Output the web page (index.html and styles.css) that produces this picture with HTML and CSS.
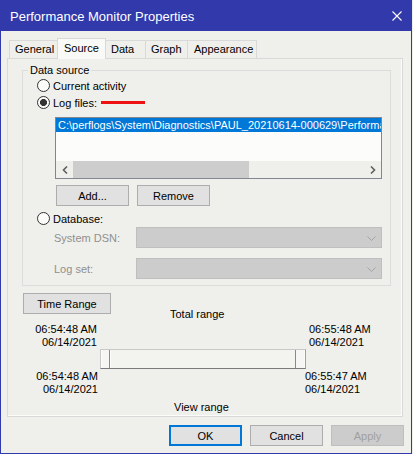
FILE: index.html
```html
<!DOCTYPE html>
<html>
<head>
<meta charset="utf-8">
<title>Performance Monitor Properties</title>
<link rel="stylesheet" href="styles.css">
</head>
<body>
<div class="window">
  <div class="titlebar">
    <span class="title">Performance Monitor Properties</span>
    <svg class="close" width="10" height="10" viewBox="0 0 10 10"><path d="M0.5 0.5 L9.5 9.5 M9.5 0.5 L0.5 9.5" stroke="#fff" stroke-width="1.1" fill="none"/></svg>
  </div>
  <div class="content">
    <div class="tabs">
      <div class="tab tab-general">General</div>
      <div class="tab tab-source selected">Source</div>
      <div class="tab tab-data">Data</div>
      <div class="tab tab-graph">Graph</div>
      <div class="tab tab-appearance">Appearance</div>
    </div>
    <div class="panel">
      <fieldset class="group">
        <legend>Data source</legend>
        <div class="group-body">
          <div class="radio-row"><span class="radio"></span>Current activity</div>
          <div class="radio-row"><span class="radio checked"></span>Log files:<span class="redline"></span></div>
          <div class="listbox">
            <div class="list-items">
              <div class="item selected">C:\perflogs\System\Diagnostics\PAUL_20210614-000629\Performance Counter.blg</div>
            </div>
            <div class="hscroll">
              <div class="sb-arrow"><svg width="6" height="8" viewBox="0 0 6 8"><path d="M5 0.5 L1.5 4 L5 7.5" stroke="#606060" stroke-width="1.6" fill="none"/></svg></div>
              <div class="sb-track"><div class="sb-thumb"></div></div>
              <div class="sb-arrow"><svg width="6" height="8" viewBox="0 0 6 8"><path d="M1 0.5 L4.5 4 L1 7.5" stroke="#606060" stroke-width="1.6" fill="none"/></svg></div>
            </div>
          </div>
          <div class="btn-row">
            <button class="btn">Add...</button>
            <button class="btn">Remove</button>
          </div>
          <div class="radio-row db-row"><span class="radio"></span>Database:</div>
          <div class="field-row">
            <span class="field-label">System DSN:</span>
            <div class="combo"><svg width="9" height="5" viewBox="0 0 9 5"><path d="M0.5 0.5 L4.5 4.5 L8.5 0.5" stroke="#a3a3a3" stroke-width="1" fill="none"/></svg></div>
          </div>
          <div class="field-row logset-row">
            <span class="field-label">Log set:</span>
            <div class="combo"><svg width="9" height="5" viewBox="0 0 9 5"><path d="M0.5 0.5 L4.5 4.5 L8.5 0.5" stroke="#a3a3a3" stroke-width="1" fill="none"/></svg></div>
          </div>
        </div>
      </fieldset>
      <div class="range">
        <button class="btn time-range">Time Range</button>
        <div class="total-caption">Total range</div>
        <div class="t-top-left">06:54:48 AM<br>06/14/2021</div>
        <div class="t-top-right">06:55:48 AM<br>06/14/2021</div>
        <div class="slider">
          <div class="thumb thumb-left"></div>
          <div class="slider-fill"></div>
          <div class="thumb thumb-right"></div>
        </div>
        <div class="t-bottom-left">06:54:48 AM<br>06/14/2021</div>
        <div class="t-bottom-right">06:55:47 AM<br>06/14/2021</div>
        <div class="view-caption">View range</div>
      </div>
    </div>
    <div class="footer">
      <button class="btn default">OK</button>
      <button class="btn">Cancel</button>
      <button class="btn disabled">Apply</button>
    </div>
  </div>
</div>
</body>
</html>
```
FILE: styles.css
```css
html, body {
  margin: 0;
  padding: 0;
  background: #efefeb;
}
body {
  font-family: "Liberation Sans", Arial, sans-serif;
  font-size: 11px;
  color: #000;
}
.window {
  width: 412px;
  height: 454px;
  box-sizing: border-box;
  border: 1px solid #3139ab;
  border-top: 0;
  background: #efefeb;
  overflow: hidden;
}
.titlebar {
  height: 31px;
  background: #3139ab;
  color: #fff;
  display: flex;
  align-items: center;
  justify-content: space-between;
  padding: 0 9px 0 9px;
  font-size: 13px;
}
.title {
  line-height: 31px;
  padding-top: 1px;
}
.close {
  display: block;
  margin-top: 0;
}
.content {
  padding: 7px 0 0 6px;
}
.tabs {
  display: flex;
  align-items: flex-end;
  height: 20px;
  margin-left: 2px;
}
.tab {
  box-sizing: border-box;
  height: 18px;
  border: 1px solid #d9d9d9;
  border-bottom: 0;
  padding-left: 5px;
  line-height: 17px;
  margin-left: -1px;
  background: #efefeb;
  white-space: nowrap;
}
.tab-general { width: 49px; margin-left: 0; }
.tab-source { width: 49px; padding-left: 6px; }
.tab-data { width: 41px; }
.tab-graph { width: 43px; }
.tab-appearance { width: 70px; padding-left: 6px; }
.tab.selected {
  height: 21px;
  margin-bottom: -1px;
  background: #f9f9f7;
  position: relative;
  z-index: 1;
  line-height: 18px;
}
.panel {
  box-sizing: border-box;
  width: 396px;
  height: 359px;
  border: 1px solid #d9d9d9;
  box-shadow: inset -1px -1px 0 #fcfcfa;
}
.group {
  box-sizing: border-box;
  width: 369px;
  margin: 5px 0 0 14px;
  padding: 0;
  border: 1px solid #dcdcdc;
}
.group legend {
  margin-left: 5px;
  padding: 0 2px;
  line-height: 13px;
}
.group-body {
  padding: 0 0 6px 14px;
}
.radio-row {
  display: flex;
  align-items: center;
  height: 17px;
}
.radio {
  box-sizing: border-box;
  width: 13px;
  height: 13px;
  border: 1px solid #333;
  border-radius: 50%;
  background: #fcfcfa;
  margin-right: 3px;
  flex: none;
}
.radio.checked {
  background: radial-gradient(circle at center, #333 0 3.2px, #fcfcfa 3.8px);
}
.redline {
  display: block;
  width: 44px;
  height: 3px;
  background: #ee1111;
  margin-left: 4px;
}
.listbox {
  box-sizing: border-box;
  width: 327px;
  height: 62px;
  margin: 6px 0 0 18px;
  border: 1px solid #82878f;
  background: #fcfcfa;
  display: flex;
  flex-direction: column;
}
.list-items {
  height: 43px;
  overflow: hidden;
}
.item {
  height: 14px;
  line-height: 14px;
  padding-left: 2px;
  white-space: nowrap;
  overflow: hidden;
}
.item.selected {
  background: #0078d7;
  color: #fff;
}
.hscroll {
  display: flex;
  height: 17px;
  background: #efefeb;
}
.sb-arrow {
  width: 17px;
  display: flex;
  align-items: center;
  justify-content: center;
  flex: none;
}
.sb-track {
  flex: 1;
}
.sb-thumb {
  width: 176px;
  height: 17px;
  background: #cdcdcd;
}
.btn {
  box-sizing: border-box;
  width: 73px;
  height: 21px;
  border: 1px solid #adadad;
  background: #e1e1e1;
  font-family: "Liberation Sans", Arial, sans-serif;
  font-size: 11px;
  color: #000;
  padding: 0;
  margin: 0;
}
.btn-row {
  display: flex;
  gap: 8px;
  margin: 6px 0 0 19px;
}
.db-row {
  margin-top: 4px;
}
.field-row {
  display: grid;
  grid-template-columns: 82px 246px;
  align-items: center;
  height: 21px;
  margin-left: 17px;
}
.logset-row {
  margin-top: 10px;
}
.field-label {
  color: #8f8f8f;
}
.combo {
  box-sizing: border-box;
  height: 21px;
  border: 1px solid #bfbfbf;
  background: #cccccc;
  display: flex;
  align-items: center;
  justify-content: flex-end;
  padding: 1px 5px 0 0;
}
.combo svg { display: block; }
.range {
  display: grid;
  grid-template-columns: 77px 205px 1fr;
  grid-template-rows: 15px 13px 28px 20px 27px auto;
  margin: 7px 0 0 15px;
  line-height: 13px;
}
.time-range {
  grid-row: 1 / span 2;
  grid-column: 1 / span 2;
  justify-self: start;
  align-self: start;
  width: 88px;
}
.total-caption {
  grid-row: 2;
  grid-column: 2;
  padding-left: 70px;
}
.t-top-left {
  grid-row: 3;
  grid-column: 1;
  text-align: right;
  padding-right: 3px;
  align-self: end;
}
.t-top-right {
  grid-row: 3;
  grid-column: 3;
  padding-left: 4px;
  align-self: end;
}
.t-bottom-left {
  grid-row: 5;
  grid-column: 1;
  text-align: right;
  padding: 1px 2px 0 0;
}
.t-bottom-right {
  grid-row: 5;
  grid-column: 3;
  padding-top: 1px;
}
.view-caption {
  grid-row: 6;
  grid-column: 2;
  padding: 5px 0 0 74px;
}
.slider {
  grid-row: 4;
  grid-column: 2;
  box-sizing: border-box;
  width: 206px;
  height: 20px;
  display: flex;
  border-top: 1px solid #c9c9c9;
  border-left: 1px solid #c9c9c9;
  border-bottom: 1px solid #7a7a7a;
  border-right: 1px solid #a0a0a0;
  background: #f3f3f0;
}
.thumb {
  box-sizing: border-box;
  width: 9px;
  background: #f6f6f4;
  border-left: 1px solid #fcfcfa;
  border-right: 1px solid #8a8a8a;
  flex: none;
}
.thumb-right {
  width: 10px;
  border-left: 1px solid #8a8a8a;
  border-right: 1px solid #fcfcfa;
}
.slider-fill {
  flex: 1;
  border-left: 1px solid #fcfcfa;
}
.footer {
  display: flex;
  justify-content: flex-end;
  gap: 8px;
  margin-top: 8px;
  padding-right: 7px;
}
.btn.default {
  border: 2px solid #0078d7;
}
.btn.disabled {
  background: #cccccc;
  border-color: #bfbfbf;
  color: #a0a0a0;
}
```
